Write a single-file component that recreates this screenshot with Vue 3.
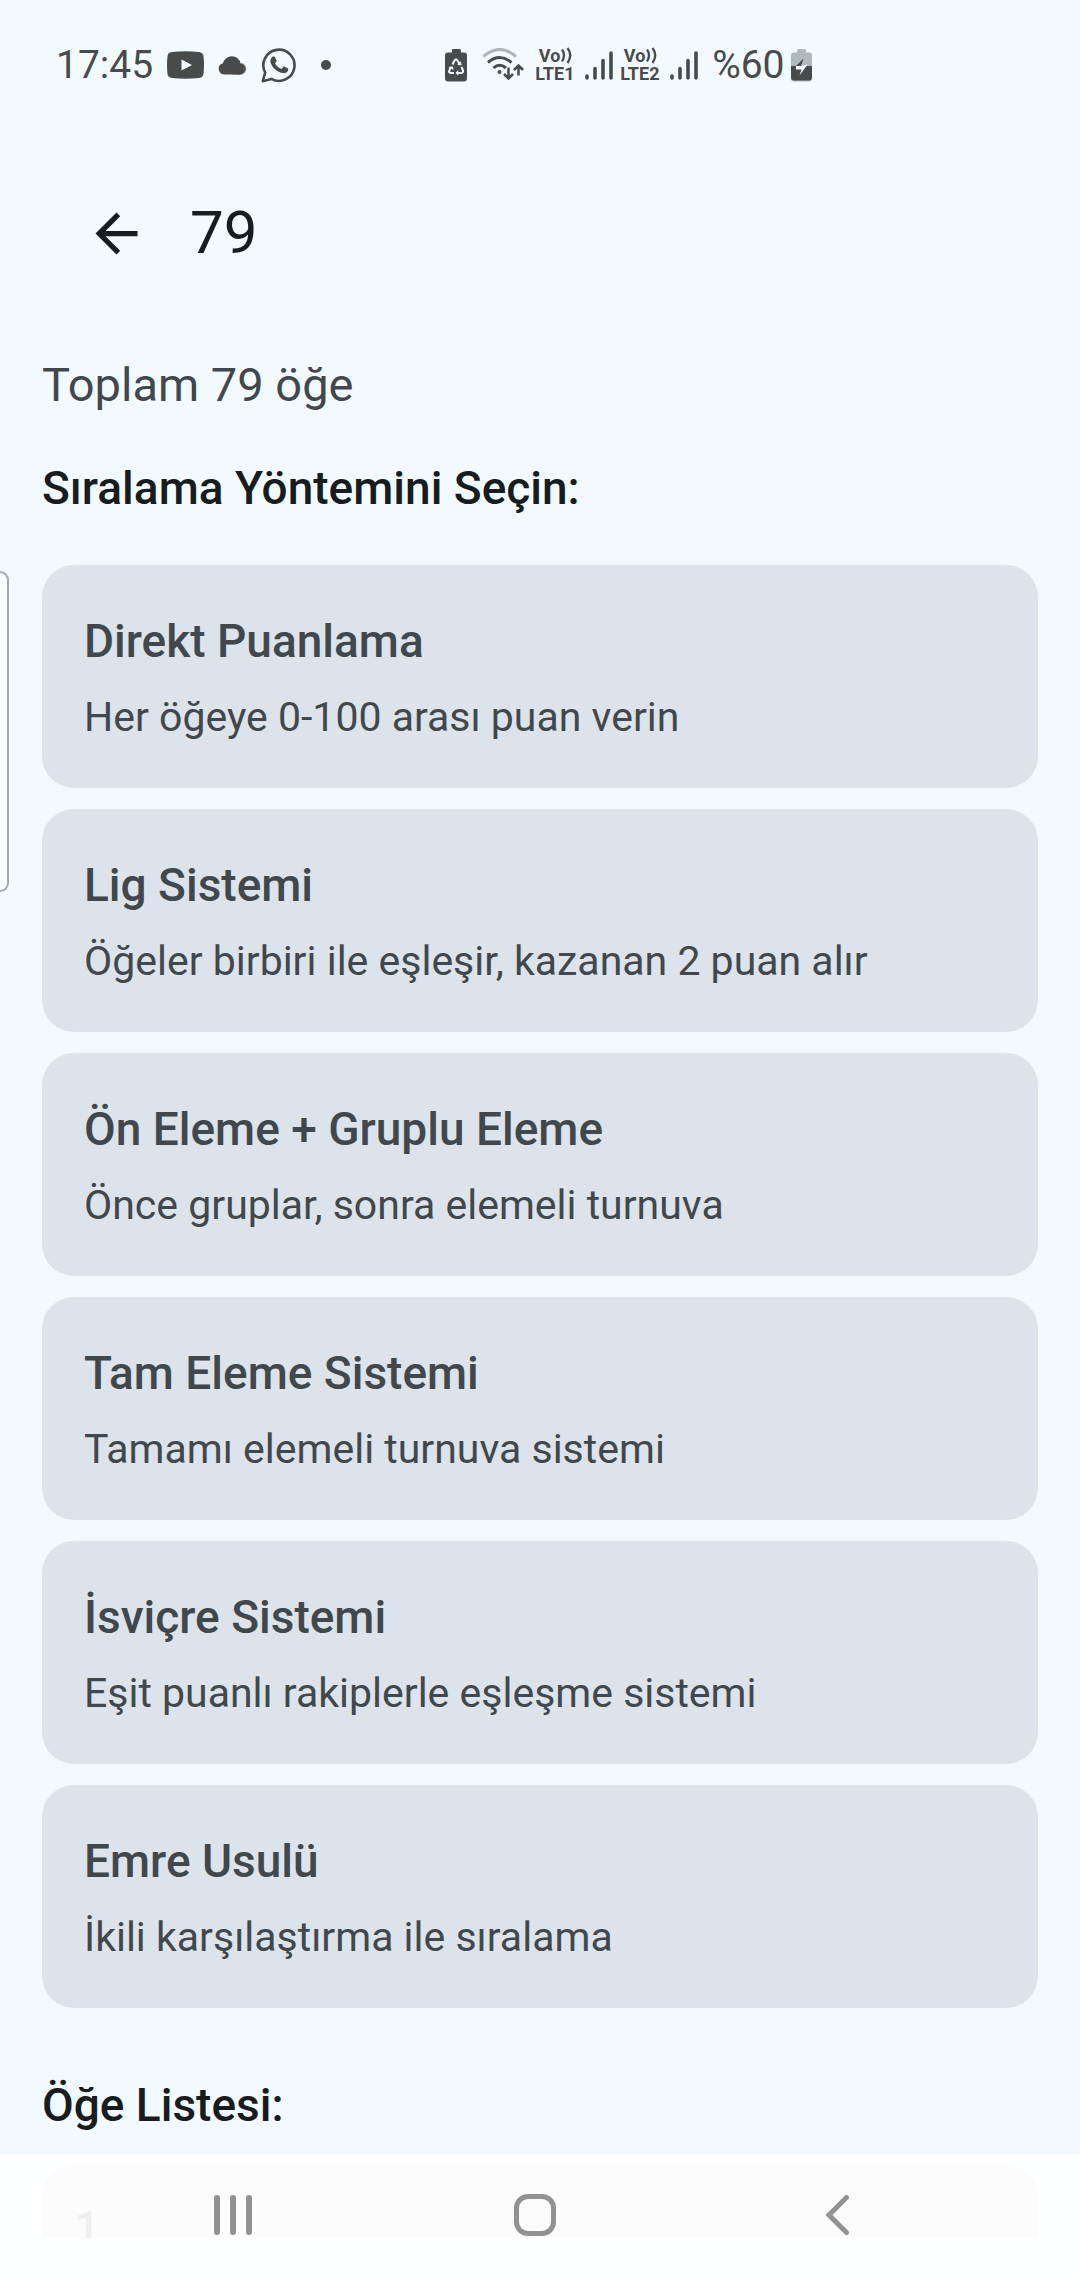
<script setup>
const methods = [
  { title: 'Direkt Puanlama', text: 'Her öğeye 0-100 arası puan verin' },
  { title: 'Lig Sistemi', text: 'Öğeler birbiri ile eşleşir, kazanan 2 puan alır' },
  { title: 'Ön Eleme + Gruplu Eleme', text: 'Önce gruplar, sonra elemeli turnuva' },
  { title: 'Tam Eleme Sistemi', text: 'Tamamı elemeli turnuva sistemi' },
  { title: 'İsviçre Sistemi', text: 'Eşit puanlı rakiplerle eşleşme sistemi' },
  { title: 'Emre Usulü', text: 'İkili karşılaştırma ile sıralama' },
]
const sims = ['LTE1', 'LTE2']
</script>

<template>
  <div class="screen">
    <div class="status">
      <div class="status-left">
        <span class="clock">17:45</span>
        <svg width="37" height="28" viewBox="0 0 37 28">
          <path fill="currentColor" fill-rule="evenodd" d="M5 1Q18.500 -.5 32 1Q36 1.500 36.500 5Q37.500 14 36.500 23Q36 26.500 32 27Q18.500 28.500 5 27Q1 26.500 .5 23Q-.5 14 .5 5Q1 1.500 5 1ZM14.500 8.500V19.500L25 14Z" />
        </svg>
        <svg class="cloud" width="29" height="20" viewBox="0 0 29 20">
          <path fill="currentColor" opacity=".75" d="M14 19.500H22.500A5.800 5.800 0 0 0 23.500 8Z" />
          <path fill="currentColor" d="M6 19.500A5.700 5.700 0 0 1 5 8.300A9 9 0 0 1 22.600 8.500A5.600 5.600 0 0 1 20 19.500Z" />
        </svg>
        <svg class="chat" width="36" height="36" viewBox="0 0 36 36">
          <path fill="none" stroke="currentColor" stroke-width="2.600" stroke-linejoin="round" d="M1.800 34.200L4.200 25.700A15.600 15.600 0 1 1 10.300 31.900Z" />
          <path fill="currentColor" d="M12.200 9.500C13.200 9.300 13.800 9.500 14.200 10.500L15.500 13.600C15.800 14.400 15 15.300 14 16.300C15.500 19 17.500 20.900 20.400 22.100L22.200 20C22.700 19.500 23.200 19.500 23.800 19.800L26.700 21.200C27.600 21.700 27.300 23 26.800 24C25.800 25.800 23.500 26.600 21.300 26.100C15.500 24.700 11.500 20.800 9.700 16C8.800 13.300 10 10.200 12.200 9.500Z" />
        </svg>
        <span class="dot"></span>
      </div>
      <div class="status-right">
        <svg width="22" height="33" viewBox="0 0 22 33">
          <path fill="currentColor" d="M7 1Q7 0 8 0H14Q16 0 16 1.500V3.500H19Q22 3.500 22 6.500V29.500Q22 32.500 19 32.500H3Q0 32.500 0 29.500V6.500Q0 3.500 3 3.500H7Z" />
          <path fill="none" stroke="#f3faff" stroke-width="2" d="M7.500 15.500L9.500 11.500Q11 9.500 12.500 11.500L14.500 15M16.500 18L18 21.500Q18.500 24 16 24H12.500M9 24H6Q3 23.500 4.500 21L6 18" />
          <path fill="#f3faff" d="M12.300 16L16.600 16.300L15.800 12.300ZM13.200 21V26.500L10.500 24ZM3.500 18L8 17.500L8.500 21Z" />
        </svg>
        <svg class="wifi" width="42" height="34" viewBox="0 0 42 34" fill="none" stroke="currentColor" stroke-width="3">
          <path opacity=".4" d="M1.500 8.500Q17.500 -5.500 34 8.500" />
          <path d="M6 14.500Q17.500 4.500 29.500 14.500M11.500 20Q17.500 14.500 24 20" />
          <circle cx="17.500" cy="24" r="2" fill="currentColor" stroke="none" />
          <path stroke-width="2.500" d="M26.500 19.500V30M22 26L26.500 30.500L31 26M36.500 27.500V18M32 22L36.500 17.500L41 22" />
        </svg>
        <div v-for="sim in sims" :key="sim" class="sim">
          <div class="volte"><span>Vo<svg width="13" height="17" viewBox="0 0 13 17" fill="none" stroke="currentColor" stroke-width="2.300"><path d="M2 2.500Q6 8 2 14.500M7.500 1Q13 8 7.500 16" /></svg></span><span class="lte">{{ sim }}</span></div>
          <svg width="28" height="31" viewBox="0 0 28 31" stroke="currentColor" stroke-width="3.600" stroke-linecap="round">
            <path d="M2 26V28M10 18.500V28M18 10.500V28M26 3V28" />
          </svg>
        </div>
        <span class="percent">%60</span>
        <svg width="21" height="33" viewBox="0 0 21 33">
          <path fill="currentColor" opacity=".38" d="M6 1.500Q6 0 7.500 0H13.500Q15 0 15 1.500V3.500H18Q21 3.500 21 6.500V29.500Q21 32.500 18 32.500H3Q0 32.500 0 29.500V6.500Q0 3.500 3 3.500H6Z" />
          <path fill="currentColor" d="M0 17H21V28.500Q21 31.500 18 31.500H3Q0 31.500 0 28.500Z" />
          <path fill="#f3faff" d="M5 17H10.500L16.500 15.500L8.500 26.500L10.500 20.500H5Z" />
          <path fill="currentColor" d="M12.500 9.500L5 17H9.500L11 14.500Z" />
        </svg>
      </div>
    </div>

    <header class="bar">
      <button class="back" aria-label="Geri">
        <svg width="63" height="63" viewBox="0 0 24 24"><path fill="currentColor" d="M20 11H7.830l5.590-5.590L12 4l-8 8 8 8 1.410-1.410L7.830 13H20v-2z" /></svg>
      </button>
      <h1>79</h1>
    </header>

    <main class="content">
      <p class="total">Toplam 79 öğe</p>
      <h2>Sıralama Yöntemini Seçin:</h2>
      <div class="methods">
        <button v-for="m in methods" :key="m.title" class="card">
          <span class="card-title">{{ m.title }}</span>
          <span class="card-text">{{ m.text }}</span>
        </button>
      </div>
      <h2 class="list-heading">Öğe Listesi:</h2>
      <div class="item">1</div>
    </main>

    <div class="edge-handle"></div>

    <nav class="system-nav">
      <button aria-label="Son uygulamalar">
        <svg width="42" height="42" viewBox="0 0 42 42" stroke="currentColor" stroke-width="6" stroke-linecap="round"><path d="M5 4V38M21 4V38M37 4V38" /></svg>
      </button>
      <button aria-label="Ana ekran">
        <svg width="42" height="42" viewBox="0 0 42 42" fill="none" stroke="currentColor" stroke-width="5"><rect x="2.500" y="2.500" width="37" height="37" rx="11.500" /></svg>
      </button>
      <button aria-label="Geri">
        <svg width="42" height="42" viewBox="0 0 42 42" fill="none" stroke="currentColor" stroke-width="5" stroke-linecap="round"><path d="M30.500 3.500L13 21L30.500 38.500" /></svg>
      </button>
    </nav>
  </div>
</template>

<style>
body {
  margin: 0;
  background: #f3faff;
}
</style>

<style scoped>
.screen {
  position: relative;
  display: flex;
  flex-direction: column;
  height: 100vh;
  overflow: hidden;
  background: #f3faff;
  color: #171c20;
  font-family: Roboto, "Noto Sans", sans-serif;
}
button {
  border: 0;
  padding: 0;
  background: none;
  color: inherit;
  font: inherit;
  text-align: left;
}
svg {
  display: block;
  flex: none;
}
h1,
h2,
p {
  margin: 0;
  font-weight: 400;
}
.status {
  display: flex;
  flex: none;
  align-items: center;
  gap: 114px;
  height: 130px;
  padding-left: 56px;
  color: #474b4c;
}
.status-left,
.status-right {
  display: flex;
  align-items: center;
}
.status-left {
  gap: 14px;
}
.clock,
.percent {
  font-size: 39px;
  line-height: 46px;
}
.dot {
  width: 10px;
  height: 10px;
  margin-left: 10px;
  border-radius: 50%;
  background: currentColor;
}
.wifi {
  margin: 0 11px 0 15px;
}
.sim {
  display: flex;
  align-items: center;
  gap: 8px;
  margin-right: 7px;
}
.volte {
  width: 42px;
  font-size: 18px;
  font-weight: 700;
  line-height: 18px;
}
.volte span {
  display: flex;
  justify-content: center;
}
.volte .lte {
  justify-content: flex-start;
}
.percent {
  margin: 0 6px 0 7px;
}
.bar {
  display: flex;
  flex: none;
  align-items: center;
  gap: 42px;
  height: 206px;
  padding-left: 85px;
}
.bar h1 {
  font-size: 60px;
  line-height: 74px;
}
.content {
  flex: 1;
  min-height: 0;
  margin-bottom: 42px;
  padding: 15px 42px 0;
  overflow: hidden;
}
.total {
  color: #41484d;
  font-size: 47px;
  line-height: 68px;
}
h2 {
  margin-top: 36px;
  font-size: 46px;
  font-weight: 500;
  line-height: 66px;
}
.methods {
  display: flex;
  flex-direction: column;
  gap: 21px;
  margin-top: 44px;
}
.card {
  display: flex;
  flex-direction: column;
  gap: 12px;
  padding: 42px 42px 40px;
  border-radius: 32px;
  background: #dce3ea;
  color: #41484d;
}
.card-title {
  font-size: 46px;
  font-weight: 500;
  line-height: 68px;
}
.card-text {
  font-size: 41px;
  line-height: 61px;
}
.list-heading {
  margin-top: 64px;
}
.item {
  margin-top: 26px;
  padding: 30px 32px;
  border-radius: 32px;
  background: #dadcde;
  color: #41484d;
  font-size: 46px;
  font-weight: 500;
  line-height: 68px;
}
.edge-handle {
  position: absolute;
  top: 571px;
  left: 0;
  box-sizing: border-box;
  width: 9px;
  height: 321px;
  border: 2px solid #a5a8a9;
  border-left: 0;
  border-radius: 0 9px 9px 0;
  background: #f8fdff;
}
.system-nav {
  position: absolute;
  right: 0;
  bottom: 0;
  left: 0;
  display: flex;
  align-items: center;
  justify-content: center;
  gap: 2px;
  height: 122px;
  padding: 0 10px 4px 0;
  background: rgba(255, 255, 255, 0.91);
  color: #929292;
}
.system-nav button {
  display: flex;
  justify-content: center;
  width: 28%;
}
</style>
